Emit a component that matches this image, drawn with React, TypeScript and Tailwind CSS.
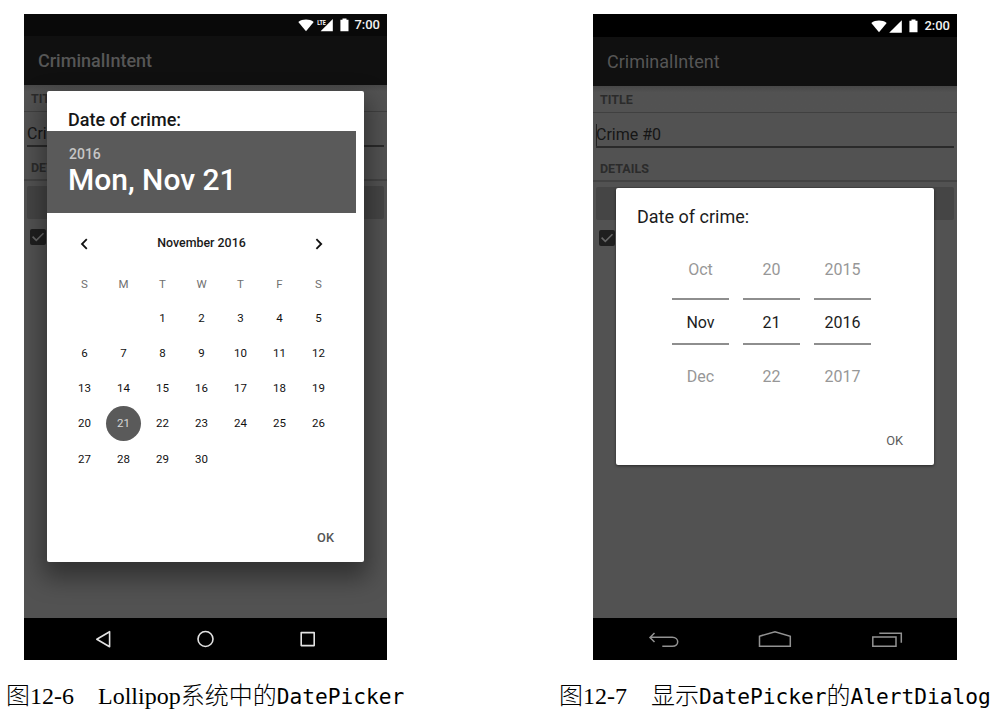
import type { ReactNode } from "react";

const weekdays = ["S", "M", "T", "W", "T", "F", "S"];
const days: (number | null)[] = [null, null, ...Array.from({ length: 30 }, (_, i) => i + 1)];
const pickers = [
  ["Oct", "Nov", "Dec"],
  ["20", "21", "22"],
  ["2015", "2016", "2017"],
];

function Wifi() {
  return (
    <svg className="h-[13px] w-4" viewBox="0 0 16 13" fill="#fff">
      <path d="M0.3 3C4.6 -0.2 11.4 -0.2 15.7 3L8 12.2Z" />
    </svg>
  );
}

function Battery() {
  return (
    <svg className="h-[14px] w-[9px]" viewBox="0 0 9 14" fill="#fff">
      <path d="M2.5 0.5h4v1.3H8.5V13.2H0.4V1.8H2.5Z" />
    </svg>
  );
}

function Check() {
  return (
    <div className="flex size-4 items-center justify-center rounded-[2px] bg-[#1f1f1f]">
      <svg className="size-4" viewBox="0 0 16 16" fill="none" stroke="#666" strokeWidth="1.6">
        <path d="M2.6 7.6L6.3 11.3L13.5 4.2" />
      </svg>
    </div>
  );
}

function CrimeForm({ cursor }: { cursor?: boolean }) {
  return (
    <div className="flex-1 bg-[#525252] px-[3px] text-[#2b2b2b]">
      <div className="-mx-[3px] h-[27px] border-b border-[#404040] bg-linear-to-b from-[#484848] to-[#525252] to-25% pl-[7px] text-[12.5px] leading-[28px] font-bold">
        TITLE
      </div>
      <div className="mt-[7px] flex h-[28px] items-center border-b-2 border-[#2a2a2a] pt-[3px] text-[16px] text-[#161616]">
        {cursor && <span className="-mr-px h-[22px] w-px bg-[#222]" />}
        Crime #0
      </div>
      <div className="-mx-[3px] mt-[8px] h-[26px] border-b-2 border-[#434343] pl-[7px] text-[12.5px] leading-[25px] font-bold">
        DETAILS
      </div>
      <div className="mt-[5px] h-[33px] rounded-[2px] bg-[#454545]" />
      <div className="mt-[10px] pl-[3px]">
        <Check />
      </div>
    </div>
  );
}

function Caption({ children }: { children: ReactNode }) {
  return (
    <div className="h-8 font-['Liberation_Serif','Noto_Sans_CJK_SC',serif] text-[24px] leading-8 font-light whitespace-pre text-black">
      {children}
    </div>
  );
}

function Mono({ children }: { children: string }) {
  return <span className="font-['DejaVu_Sans_Mono',monospace] text-[21.2px] font-normal">{children}</span>;
}

function CalendarDialog() {
  return (
    <div className="absolute top-[77px] left-[23px] flex h-[471px] w-[317px] flex-col rounded-[2px] bg-white shadow-[0_12px_24px_4px_rgba(0,0,0,0.4)]">
      <h2 className="h-[40px] pt-[17px] pl-[21px] text-[18px] leading-[24px] font-medium text-[#161616]">
        Date of crime:
      </h2>
      <div className="h-[82px] w-[309px] bg-[#5a5a5a] pl-[21px]">
        <div className="pt-[14px] pl-px text-[14px] leading-[18px] font-medium text-[#c6c6c6]">2016</div>
        <div className="text-[30px] leading-[34px] font-medium text-white">Mon, Nov 21</div>
      </div>
      <div className="ml-[18px] flex h-[61px] w-[273px] items-center justify-between px-[14px] text-[12.4px] font-medium text-[#1a1a1a]">
        <svg className="h-3 w-[10px]" viewBox="0 0 10 12" fill="none" stroke="#111" strokeWidth="1.8">
          <path d="M7.8 1.2L3 6L7.8 10.8" />
        </svg>
        <span>November 2016</span>
        <svg className="h-3 w-[10px]" viewBox="0 0 10 12" fill="none" stroke="#111" strokeWidth="1.8">
          <path d="M2.4 1.2L7.2 6L2.4 10.8" />
        </svg>
      </div>
      <div className="ml-[18px] grid h-[26px] w-[273px] grid-cols-7 text-center text-[11.5px] leading-[20px] text-[#707070]">
        {weekdays.map((d, i) => (
          <span key={i}>{d}</span>
        ))}
      </div>
      <div className="ml-[18px] grid w-[273px] auto-rows-[35.3px] grid-cols-7 place-items-center text-[11.5px] text-[#111]">
        {days.map((d, i) => (
          <span
            key={i}
            className={
              d === 21
                ? "flex size-[35px] items-center justify-center rounded-full bg-[#5a5a5a] text-[#d8d8d8]"
                : "pt-px"
            }
          >
            {d}
          </span>
        ))}
      </div>
      <div className="mt-auto mb-[15px] pr-[30px] text-right text-[12.8px] leading-[18px] font-medium text-[#555]">OK</div>
    </div>
  );
}

function SpinnerDialog() {
  return (
    <div className="absolute top-[174px] left-[23px] flex h-[277px] w-[318px] flex-col rounded-[2px] bg-white shadow-[0_1px_3px_rgba(0,0,0,0.5)]">
      <h2 className="pt-[17px] pl-[21px] text-[18px] leading-[24px] text-[#1c1c1c]">Date of crime:</h2>
      <div className="mt-[11px] ml-[56px] flex gap-[14px] text-center text-[16px]">
        {pickers.map(([before, current, after]) => (
          <div key={current} className="w-[57px]">
            <div className="h-[58px] leading-[60px] text-[#979797]">{before}</div>
            <div className="h-[47px] border-y-2 border-[#8e8e8e] leading-[45px] text-[#1c1c1c]">{current}</div>
            <div className="h-[60px] leading-[63px] text-[#979797]">{after}</div>
          </div>
        ))}
      </div>
      <div className="mt-auto mb-[15px] pr-[31px] text-right text-[12.8px] leading-[18px] text-[#5c5c5c]">OK</div>
    </div>
  );
}

export default function App() {
  return (
    <main className="flex h-[726px] w-[1007px] overflow-hidden bg-white pt-[14px] font-[Roboto,sans-serif]">
      <section className="w-[559px] pl-[6px]">
        <div className="relative ml-[18px] flex h-[646px] w-[363px] flex-col overflow-hidden">
          <div className="flex h-[22px] items-center justify-end bg-[#090909] pr-[7px] text-[13px] font-medium text-[#f2f2f2]">
            <Wifi />
            <svg className="ml-[3px] h-[14px] w-4" viewBox="0 0 16 14" fill="#fff">
              <path d="M15.8 1V13.2H3.6Z" />
              <text x="0.2" y="6.8" fontSize="8" fontWeight="700" textLength="8.6" lengthAdjust="spacingAndGlyphs" stroke="#090909" strokeWidth="1.2" paintOrder="stroke">
                LTE
              </text>
            </svg>
            <span className="ml-[7px] flex"><Battery /></span>
            <span className="ml-[5px]">7:00</span>
          </div>
          <header className="h-[49px] bg-[#101010] pl-[14px] text-[18px] leading-[50px] font-medium text-[#565656]">
            CriminalIntent
          </header>
          <CrimeForm />
          <nav className="flex h-[42px] items-center bg-black pl-[71px]">
            <svg className="h-5 w-[230px]" viewBox="0 0 230 20" fill="none" stroke="#e2e2e2" strokeWidth="1.6" strokeLinejoin="round">
              <path d="M14.6 2.7V17.8L1.8 10.3Z" />
              <circle cx="110.5" cy="10" r="7.5" />
              <rect x="206.2" y="3.6" width="13" height="13" />
            </svg>
          </nav>
          <CalendarDialog />
        </div>
        <div className="pt-[20px]">
          <Caption>图12-6　Lollipop系统中的<Mono>DatePicker</Mono></Caption>
        </div>
      </section>
      <section>
        <div className="relative ml-[34px] flex h-[646px] w-[364px] flex-col overflow-hidden">
          <div className="flex h-[23px] items-center justify-end bg-black pt-px pr-[7px] text-[13px] font-medium text-[#f2f2f2]">
            <Wifi />
            <svg className="ml-[2px] h-[13px] w-[13px]" viewBox="0 0 13 13" fill="#fff">
              <path d="M12.8 0.3V12.7H0.2Z" />
            </svg>
            <span className="ml-[7px] flex"><Battery /></span>
            <span className="ml-[6px]">2:00</span>
          </div>
          <header className="h-[49px] bg-[#101010] pl-[14px] text-[18px] leading-[50px] text-[#565656]">
            CriminalIntent
          </header>
          <CrimeForm cursor />
          <nav className="flex h-[42px] items-center bg-black pl-[55px]">
            <svg className="h-5 w-[256px]" viewBox="0 0 256 20" fill="none" stroke="#929292" strokeWidth="1.5">
              <path d="M6.5 4L2 8.5L6.5 13M2 8.3H24.3C31.5 8.3 31.5 17.3 24.3 17.3H14.3" />
              <path d="M111.5 7.2L127 2.7L142.3 7.2V17.3H111.5Z" />
              <path d="M224.8 8H248V17.3H224.8ZM231.3 4.2H253.3V13.7" />
            </svg>
          </nav>
          <SpinnerDialog />
        </div>
        <div className="pt-[20px]">
          <Caption>图12-7　显示<Mono>DatePicker</Mono>的<Mono>AlertDialog</Mono></Caption>
        </div>
      </section>
    </main>
  );
}
